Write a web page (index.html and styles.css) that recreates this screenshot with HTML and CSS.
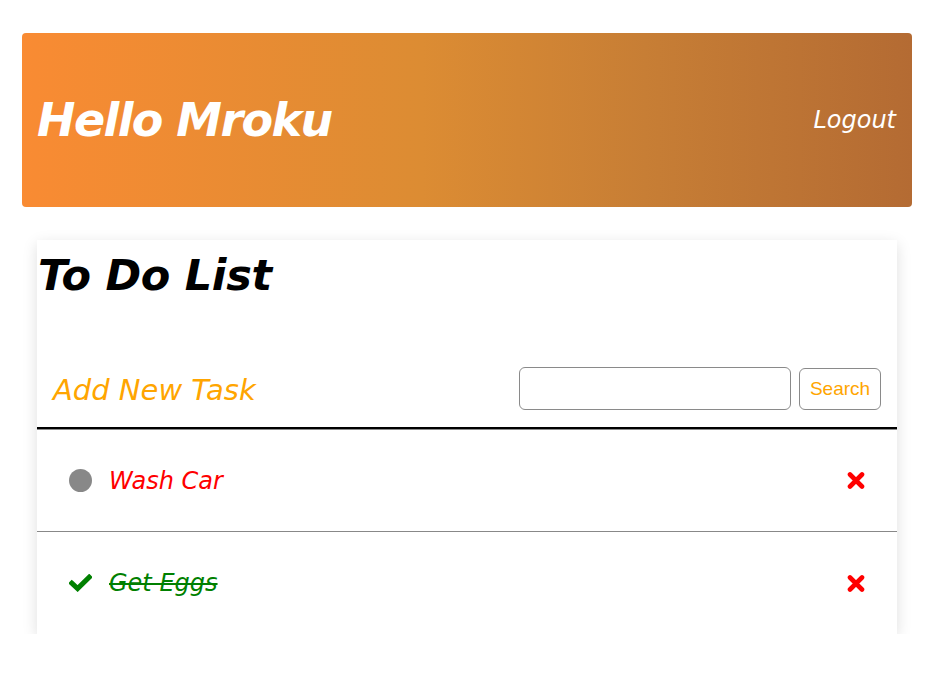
FILE: index.html
```html
<!DOCTYPE html>
<html lang="en">
<head>
<meta charset="utf-8">
<title>To Do</title>
<link rel="stylesheet" href="styles.css">
</head>
<body>
<header class="header">
  <h1 class="greeting">Hello Mroku</h1>
  <a class="logout" href="#">Logout</a>
</header>
<main class="card">
  <h2 class="title">To Do List</h2>
  <div class="add-row">
    <span class="add-task">Add New Task</span>
    <form class="search">
      <input class="search-input" type="text">
      <button class="search-btn" type="button">Search</button>
    </form>
  </div>
  <ul class="tasks">
    <li class="task">
      <span class="status"><span class="dot"></span></span>
      <span class="task-name pending">Wash Car</span>
      <svg class="remove" width="18" height="17" viewBox="0 0 18 17"><path d="M3 2.5 L15 14.5 M15 2.5 L3 14.5" stroke="#ff0000" stroke-width="4.6" stroke-linecap="round"/></svg>
    </li>
    <li class="task">
      <span class="status"><svg width="23" height="18" viewBox="0 0 23 18"><path d="M2.8 9.2 L8.6 14.6 L20.2 3.2" fill="none" stroke="#008000" stroke-width="5" stroke-linecap="square"/></svg></span>
      <span class="task-name done">Get Eggs</span>
      <svg class="remove" width="18" height="17" viewBox="0 0 18 17"><path d="M3 2.5 L15 14.5 M15 2.5 L3 14.5" stroke="#ff0000" stroke-width="4.6" stroke-linecap="round"/></svg>
    </li>
  </ul>
</main>
</body>
</html>
```
FILE: styles.css
```css
html, body {
  margin: 0;
  padding: 0;
  background: #ffffff;
}
body {
  font-family: "DejaVu Sans", "Open Sans", sans-serif;
  padding-top: 33px;
}
.header {
  width: 890px;
  height: 174px;
  margin: 0 auto 33px 22px;
  box-sizing: border-box;
  padding: 0 16px 0 15px;
  display: flex;
  align-items: center;
  justify-content: space-between;
  border-radius: 4px;
  background: linear-gradient(90deg, #f98b33 0%, #dc8c33 45%, #c77e35 70%, #b46b33 100%);
}
.greeting {
  margin: 0;
  color: #ffffff;
  font-size: 46px;
  font-weight: 700;
  font-style: italic;
  letter-spacing: -1.6px;
  line-height: 1;
}
.logout {
  color: #ffffff;
  text-decoration: none;
  font-style: italic;
  font-size: 24px;
  line-height: 1;
}
.card {
  width: 860px;
  margin-left: 37px;
  background: #ffffff;
  box-shadow: 0 4px 14px rgba(0, 0, 0, 0.13);
}
.title {
  margin: 0;
  height: 110px;
  box-sizing: border-box;
  padding: 14px 0 0 1px;
  font-size: 43px;
  font-weight: 700;
  font-style: italic;
  letter-spacing: -0.3px;
  line-height: 1;
  color: #000000;
}
.add-row {
  height: 79px;
  box-sizing: border-box;
  padding: 0 16px;
  display: flex;
  align-items: center;
  justify-content: space-between;
  border-bottom: 2px solid #000000;
}
.add-task {
  color: #ffa500;
  font-style: italic;
  font-size: 29px;
  line-height: 1;
  padding-top: 4px;
}
.search {
  display: flex;
  align-items: center;
  gap: 8px;
  margin: 0;
}
.search-input {
  width: 272px;
  height: 43px;
  box-sizing: border-box;
  border: 1px solid #8a8a8a;
  border-radius: 6px;
  margin: 0;
  padding: 0 8px;
}
.search-btn {
  width: 82px;
  height: 42px;
  box-sizing: border-box;
  border: 1px solid #8a8a8a;
  border-radius: 6px;
  background: #ffffff;
  color: #ffa500;
  font-family: "Liberation Sans", Arial, sans-serif;
  font-size: 19px;
  margin: 0;
  padding: 0;
}
.tasks {
  list-style: none;
  margin: 0;
  padding: 0;
  border-top: 1px solid #8a8a8a;
}
.task {
  height: 102px;
  box-sizing: border-box;
  padding: 0 32px;
  display: flex;
  align-items: center;
  border-bottom: 1px solid #888888;
}
.task:last-child {
  border-bottom: none;
}
.status {
  width: 40px;
  display: flex;
  align-items: center;
}
.dot {
  width: 23px;
  height: 23px;
  border-radius: 50%;
  background: #888888;
}
.task-name {
  flex: 1;
  font-style: italic;
  font-size: 24px;
  line-height: 1;
}
.pending {
  color: #ff0000;
}
.done {
  color: #008000;
  text-decoration: line-through;
  text-decoration-thickness: 2px;
}
.remove {
  display: block;
}
```
